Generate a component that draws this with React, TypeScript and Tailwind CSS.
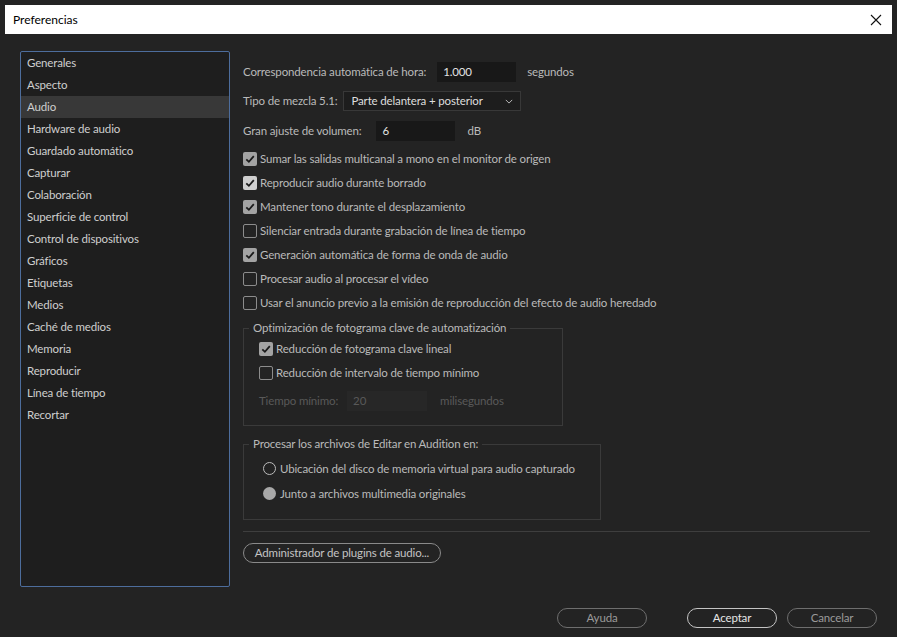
import { useState } from "react";

const sections = [
  "Generales",
  "Aspecto",
  "Audio",
  "Hardware de audio",
  "Guardado automático",
  "Capturar",
  "Colaboración",
  "Superficie de control",
  "Control de dispositivos",
  "Gráficos",
  "Etiquetas",
  "Medios",
  "Caché de medios",
  "Memoria",
  "Reproducir",
  "Línea de tiempo",
  "Recortar",
];

const options = [
  { label: "Sumar las salidas multicanal a mono en el monitor de origen", checked: true, dim: true },
  { label: "Reproducir audio durante borrado", checked: true, dim: false },
  { label: "Mantener tono durante el desplazamiento", checked: true, dim: true },
  { label: "Silenciar entrada durante grabación de línea de tiempo", checked: false, dim: false },
  { label: "Generación automática de forma de onda de audio", checked: true, dim: true },
  { label: "Procesar audio al procesar el vídeo", checked: false, dim: false },
  { label: "Usar el anuncio previo a la emisión de reproducción del efecto de audio heredado", checked: false, dim: false },
];

function Check({ checked, dim }: { checked: boolean; dim?: boolean }) {
  if (!checked) {
    return <span className="size-[14px] shrink-0 rounded-[2px] border-[1.5px] border-[#8c8c8c]" />;
  }
  return (
    <span
      className={
        "flex size-[14px] shrink-0 items-center justify-center rounded-[2px] " +
        (dim ? "bg-[#a3a3a3]" : "bg-[#cfcfcf]")
      }
    >
      <svg viewBox="0 0 14 14" className="size-[14px]">
        <path d="M3.3 7.3 L5.9 9.8 L10.8 4.2" fill="none" stroke="#1b1b1b" strokeWidth="1.8" />
      </svg>
    </span>
  );
}

function Pill({ label, strong }: { label: string; strong?: boolean }) {
  return (
    <button
      className={
        "flex h-[20px] w-[90px] items-center justify-center rounded-full border " +
        (strong ? "border-[#c4c4c4] text-[#e6e6e6]" : "border-[#6e6e6e] text-[#9a9a9a]")
      }
    >
      {label}
    </button>
  );
}

export default function App() {
  const [active, setActive] = useState("Audio");

  return (
    <div
      className="h-[637px] w-[897px] overflow-hidden whitespace-nowrap bg-[#232323] px-[5px] pt-[5px] text-[11.5px] tracking-[-0.15px] text-[#bababa]"
      style={{ fontFamily: 'Lato, "Open Sans", sans-serif' }}
    >
      <div className="flex h-[29px] w-[887px] items-center justify-between bg-white pl-[8px] pr-[10px] text-[12px] tracking-normal text-black">
        <span>Preferencias</span>
        <svg viewBox="0 0 12 12" className="size-[12px]">
          <path d="M1 1 L11 11 M11 1 L1 11" stroke="#111" strokeWidth="1.1" />
        </svg>
      </div>

      <div className="flex pl-[15px] pt-[17px]">
        <ul className="h-[536px] w-[210px] shrink-0 rounded-[2px] border border-[#4d6d9c] bg-[#1e1e1e] text-[#cfcfcf]">
          {sections.map((s) => (
            <li
              key={s}
              onClick={() => setActive(s)}
              className={"flex h-[22px] items-center pl-[6px] " + (active === s ? "bg-[#383838]" : "")}
            >
              {s}
            </li>
          ))}
        </ul>

        <div className="ml-[13px] flex w-[634px] flex-col">
          <div className="mt-[11px] flex h-[20px] items-center">
            <span>Correspondencia automática de hora:</span>
            <span className="ml-[11px] flex h-[20px] w-[79px] items-center bg-[#181818] pl-[6px] text-[#e2e2e2]">1.000</span>
            <span className="ml-[11px]">segundos</span>
          </div>
          <div className="mt-[9px] flex h-[20px] items-center">
            <span>Tipo de mezcla 5.1:</span>
            <span className="ml-[6px] flex h-[20px] w-[178px] items-center justify-between border border-[#383838] bg-[#1d1d1d] pl-[7px] pr-[7px] text-[#dedede]">
              Parte delantera + posterior
              <svg viewBox="0 0 10 6" className="h-[5px] w-[8px]">
                <path d="M1 1 L5 5 L9 1" fill="none" stroke="#bdbdbd" strokeWidth="1.2" />
              </svg>
            </span>
          </div>
          <div className="mt-[10px] flex h-[20px] items-center">
            <span>Gran ajuste de volumen:</span>
            <span className="ml-[15px] flex h-[20px] w-[79px] items-center bg-[#181818] pl-[6px] text-[#e2e2e2]">6</span>
            <span className="ml-[12px]">dB</span>
          </div>

          <div className="mt-[6px] flex flex-col">
            {options.map((o) => (
              <label key={o.label} className="flex h-[24px] items-center gap-[3px]">
                <Check checked={o.checked} dim={o.dim} />
                <span>{o.label}</span>
              </label>
            ))}
          </div>

          <fieldset className="mt-[6px] h-[105px] w-[320px] border border-[#3a3a3a]">
            <legend className="ml-[5px] px-[4px] leading-[14px]">Optimización de fotograma clave de automatización</legend>
            <div className="pl-[15px]">
              <label className="mt-[2px] flex h-[24px] items-center gap-[3px]">
                <Check checked dim />
                <span>Reducción de fotograma clave lineal</span>
              </label>
              <label className="flex h-[24px] items-center gap-[3px]">
                <Check checked={false} />
                <span>Reducción de intervalo de tiempo mínimo</span>
              </label>
              <div className="mt-[6px] flex h-[20px] items-center text-[#595959]">
                <span>Tiempo mínimo:</span>
                <span className="ml-[9px] flex h-[20px] w-[80px] items-center bg-[#272727] pl-[6px]">20</span>
                <span className="ml-[13px]">milisegundos</span>
              </div>
            </div>
          </fieldset>

          <fieldset className="mt-[11px] h-[83px] w-[358px] border border-[#3a3a3a]">
            <legend className="ml-[5px] px-[4px] leading-[14px]">Procesar los archivos de Editar en Audition en:</legend>
            <div className="pl-[19px]">
              <div className="mt-[5px] flex h-[25px] items-center gap-[4px]">
                <span className="size-[13px] shrink-0 rounded-full border-[1.5px] border-[#bcbcbc]" />
                <span>Ubicación del disco de memoria virtual para audio capturado</span>
              </div>
              <div className="flex h-[25px] items-center gap-[4px]">
                <span className="size-[13px] shrink-0 rounded-full bg-[#a8a8a8]" />
                <span>Junto a archivos multimedia originales</span>
              </div>
            </div>
          </fieldset>

          <div className="mt-[11px] h-px w-[627px] bg-[#3e3e3e]" />

          <button className="mt-[11px] flex h-[20px] w-[198px] items-center justify-center rounded-full border border-[#8a8a8a] text-[#c4c4c4]">
            Administrador de plugins de audio...
          </button>

          <div className="mt-[45px] flex items-center pl-[314px]">
            <Pill label="Ayuda" />
            <span className="ml-[40px]">
              <Pill label="Aceptar" strong />
            </span>
            <span className="ml-[10px]">
              <Pill label="Cancelar" />
            </span>
          </div>
        </div>
      </div>
    </div>
  );
}
